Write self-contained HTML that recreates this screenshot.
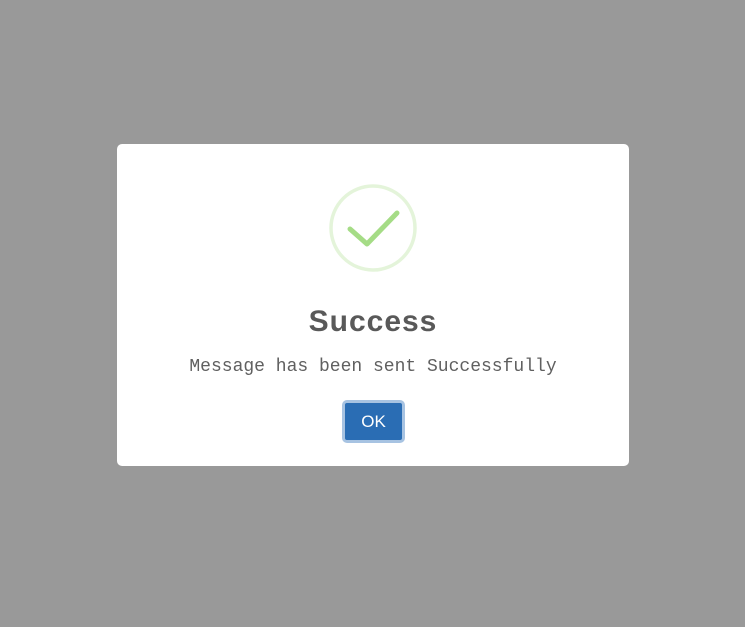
<!DOCTYPE html>
<html><head><style>
html,body{margin:0;padding:0;width:745px;height:627px;background:#999999;overflow:hidden;font-family:"Liberation Sans",sans-serif}
.m{position:absolute;left:117px;top:144px;width:512px;height:322px;background:#fff;border-radius:5px}
svg{position:absolute;left:0;top:0}
.t{position:absolute;left:0;width:512px;top:158px;text-align:center;font-size:30px;font-weight:bold;color:#595959;letter-spacing:1px;line-height:40px}
.p{position:absolute;left:0;width:512px;top:211px;text-align:center;font-family:"Liberation Mono",monospace;font-size:18px;color:#606060;line-height:24px}
.b{position:absolute;left:225px;top:256px;width:57px;height:37px;background:#2a6db4;border:3px solid #a7c3e2;border-radius:5px;color:#fff;font-size:17px;line-height:37px;text-align:center}
</style></head><body>
<div class="m">
<svg width="512" height="322"><circle cx="256" cy="84" r="42" fill="none" stroke="#e4f4da" stroke-width="3.5"/>
<polyline points="233,85 250,100 280,69" fill="none" stroke="#a5dc86" stroke-width="5" stroke-linecap="round" stroke-linejoin="round"/></svg>
<div class="t">Success</div>
<div class="p">Message has been sent Successfully</div>
<div class="b">OK</div>
</div>
</body></html>
